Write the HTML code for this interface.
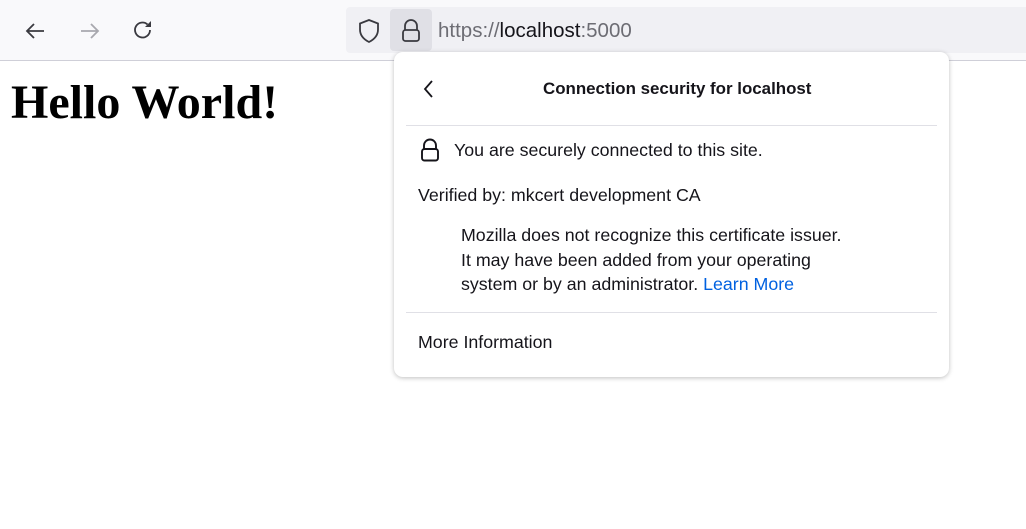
<!DOCTYPE html>
<html><head><style>
body{margin:0;width:1026px;height:529px;overflow:hidden;background:#fff;font-family:"Liberation Sans",sans-serif;position:relative}
.tb{position:absolute;left:0;top:0;width:1026px;height:60px;background:#f9f9fb;border-bottom:1px solid #cfcfd8}
.url{position:absolute;left:346px;top:7px;width:680px;height:46px;background:#f0f0f4;border-radius:4px 0 0 4px}
.lockbtn{position:absolute;left:390px;top:9px;width:42px;height:42px;background:#e0e0e6;border-radius:4px}
.urltext{position:absolute;left:438px;top:19px;font-size:20.5px;color:#6d6d74}
.urltext b{font-weight:normal;color:#15141a}
h1{position:absolute;left:11px;top:76px;margin:0;font-family:"Liberation Serif",serif;font-size:48px;font-weight:bold;line-height:54px}
.pop{position:absolute;left:394px;top:52px;width:555px;height:325px;background:#fff;border-radius:9px;box-shadow:0 1px 5px rgba(0,0,0,0.25)}
.t{position:absolute;font-size:17.8px;color:#15141a;white-space:nowrap}
.hr{position:absolute;left:12px;width:531px;height:1px;background:#e0e0e6}
</style></head><body>
<div class="tb">
<svg style="position:absolute;left:23px;top:19px" width="24" height="24" viewBox="0 0 24 24"><path d="M21 12H4M11 5l-7 7 7 7" fill="none" stroke="#3a3a40" stroke-width="1.8"/></svg>
<svg style="position:absolute;left:78px;top:19px" width="24" height="24" viewBox="0 0 24 24"><path d="M3 12h17M13 5l7 7-7 7" fill="none" stroke="#a8a8ae" stroke-width="1.8"/></svg>
<svg style="position:absolute;left:131px;top:18px" width="24" height="24" viewBox="0 0 24 24"><path d="M19 12a7.5 7.5 0 1 1-2.5-5.6" fill="none" stroke="#3a3a40" stroke-width="1.8"/><path d="M20 3v6h-6z" fill="#3a3a40"/></svg>
<div class="url"></div>
<svg style="position:absolute;left:357px;top:18px" width="24" height="26" viewBox="0 0 24 26"><path d="M12 2L3 5.5v6c0 6 4 10 9 12.5 5-2.5 9-6.5 9-12.5v-6z" fill="none" stroke="#3a3a40" stroke-width="1.8"/></svg>
<div class="lockbtn"></div>
<svg style="position:absolute;left:400px;top:18px" width="22" height="26" viewBox="0 0 22 26"><path d="M5 12V8a6 6 0 0 1 12 0v4" fill="none" stroke="#3a3a40" stroke-width="1.8"/><rect x="3" y="12" width="16" height="11" rx="2.5" fill="none" stroke="#3a3a40" stroke-width="1.8"/></svg>
<div class="urltext">https://<b>localhost</b>:5000</div>
</div>
<h1>Hello World!</h1>
<div class="pop">
<svg style="position:absolute;left:28px;top:27px" width="14" height="20" viewBox="0 0 14 20"><path d="M10 2L3 10l7 8" fill="none" stroke="#15141a" stroke-width="1.8"/></svg>
<div class="t" style="left:149px;top:27px;font-weight:bold;font-size:16.9px">Connection security for localhost</div>
<div class="hr" style="top:73px"></div>
<svg style="position:absolute;left:26px;top:86px" width="20" height="26" viewBox="0 0 20 26"><path d="M4 11V7.5a6 6 0 0 1 12 0V11" fill="none" stroke="#15141a" stroke-width="1.9"/><rect x="2" y="11" width="16" height="11.5" rx="2.5" fill="none" stroke="#15141a" stroke-width="1.9"/></svg>
<div class="t" style="left:60px;top:88px">You are securely connected to this site.</div>
<div class="t" style="left:24px;top:133px">Verified by: mkcert development CA</div>
<div class="t" style="left:67px;top:171px;line-height:24.5px">Mozilla does not recognize this certificate issuer.<br>It may have been added from your operating<br>system or by an administrator. <span style="color:#0061e0">Learn More</span></div>
<div class="hr" style="top:260px"></div>
<div class="t" style="left:24px;top:280px">More Information</div>
</div>
</body></html>
